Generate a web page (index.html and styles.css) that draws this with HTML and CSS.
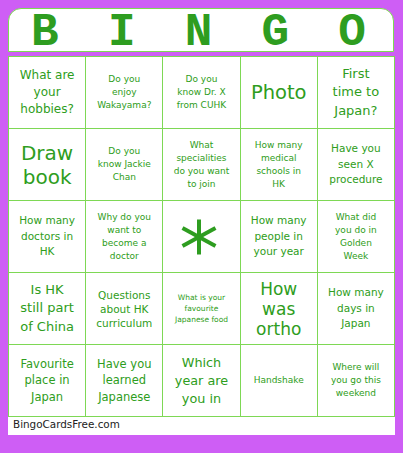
FILE: index.html
```html
<!DOCTYPE html>
<html>
<head>
<meta charset="utf-8">
<link rel="stylesheet" href="styles.css">
</head>
<body>
<div class="page">
  <div class="header">
    <span>B</span><span>I</span><span>N</span><span>G</span><span>O</span>
  </div>
  <div class="card">
    <div class="grid">
      <div class="cell s12">What are<br>your<br>hobbies?</div>
      <div class="cell s9">Do you<br>enjoy<br>Wakayama?</div>
      <div class="cell s9">Do you<br>know Dr. X<br>from CUHK</div>
      <div class="cell s19">Photo</div>
      <div class="cell s13">First<br>time to<br>Japan?</div>

      <div class="cell s20">Draw<br>book</div>
      <div class="cell s9">Do you<br>know Jackie<br>Chan</div>
      <div class="cell s9">What<br>specialities<br>do you want<br>to join</div>
      <div class="cell s9">How many<br>medical<br>schools in<br>HK</div>
      <div class="cell s10">Have you<br>seen X<br>procedure</div>

      <div class="cell s10">How many<br>doctors in<br>HK</div>
      <div class="cell s9">Why do you<br>want to<br>become a<br>doctor</div>
      <div class="cell free">
        <svg class="star" width="36" height="36" viewBox="0 0 36 36">
          <g stroke="#2e9d20" stroke-width="4">
            <line x1="18" y1="0.5" x2="18" y2="35.5"/>
            <line x1="1.5" y1="9" x2="34.5" y2="27"/>
            <line x1="1.5" y1="27" x2="34.5" y2="9"/>
          </g>
        </svg>
      </div>
      <div class="cell s10">How many<br>people in<br>your year</div>
      <div class="cell s9">What did<br>you do in<br>Golden<br>Week</div>

      <div class="cell s13">Is HK<br>still part<br>of China</div>
      <div class="cell s10q">Questions<br>about HK<br>curriculum</div>
      <div class="cell s7">What is your<br>favourite<br>Japanese food</div>
      <div class="cell s17">How<br>was<br>ortho</div>
      <div class="cell s10">How many<br>days in<br>Japan</div>

      <div class="cell s11">Favourite<br>place in<br>Japan</div>
      <div class="cell s11">Have you<br>learned<br>Japanese</div>
      <div class="cell s12b">Which<br>year are<br>you in</div>
      <div class="cell s9">Handshake</div>
      <div class="cell s9">Where will<br>you go this<br>weekend</div>
    </div>
    <div class="footer">BingoCardsFree.com</div>
  </div>
</div>
</body>
</html>
```

FILE: styles.css
```css
html, body {
  margin: 0;
  padding: 0;
  background: #ce5ef5;
}

.page {
  width: 403px;
  height: 453px;
  padding: 8px 0 0 8px;
  box-sizing: border-box;
}

.header {
  width: 386px;
  height: 44px;
  box-sizing: border-box;
  background: #ffffff;
  border: 1px solid #7ed855;
  border-radius: 13px 13px 0 0;
  display: grid;
  grid-template-columns: repeat(5, 1fr);
  align-items: center;
  font-family: "Liberation Mono", "Courier New", monospace;
  font-weight: bold;
  font-size: 46px;
  line-height: 42px;
  color: #2e9d20;
  padding-top: 3px;
}

.header span {
  text-align: center;
  padding-right: 5px;
}

.card {
  margin-top: 4px;
  width: 387px;
  height: 379px;
  background: #ffffff;
}

.grid {
  display: grid;
  grid-template-columns: repeat(5, 1fr);
  grid-template-rows: repeat(5, 71px);
  gap: 1px;
  padding: 1px;
  background: #7ed855;
  width: 387px;
  box-sizing: border-box;
}

.cell {
  background: #ffffff;
  display: flex;
  align-items: center;
  justify-content: center;
  text-align: center;
  font-family: "DejaVu Sans", Verdana, sans-serif;
  color: #2e9d20;
  padding: 0 2px;
  overflow: hidden;
}

.s7 { font-size: 7.5px; line-height: 11px; }
.s9 { font-size: 9px; line-height: 13px; }
.s10 { font-size: 10.5px; line-height: 15.5px; }
.s10q { font-size: 10.5px; line-height: 14px; }
.s11 { font-size: 11.5px; line-height: 16.5px; }
.s12 { font-size: 12px; line-height: 17px; }
.s12b { font-size: 12.8px; line-height: 18px; }
.s13 { font-size: 13px; line-height: 18.5px; }
.s17 { font-size: 17px; line-height: 20px; }
.s19 { font-size: 19.5px; line-height: 24px; }
.s20 { font-size: 20px; line-height: 24px; }

.free {
  padding-right: 6px;
}

.star {
  display: block;
}

.footer {
  font-family: "DejaVu Sans", Verdana, sans-serif;
  font-size: 10.4px;
  line-height: 13px;
  color: #222222;
  padding: 1px 0 0 5px;
}
```
